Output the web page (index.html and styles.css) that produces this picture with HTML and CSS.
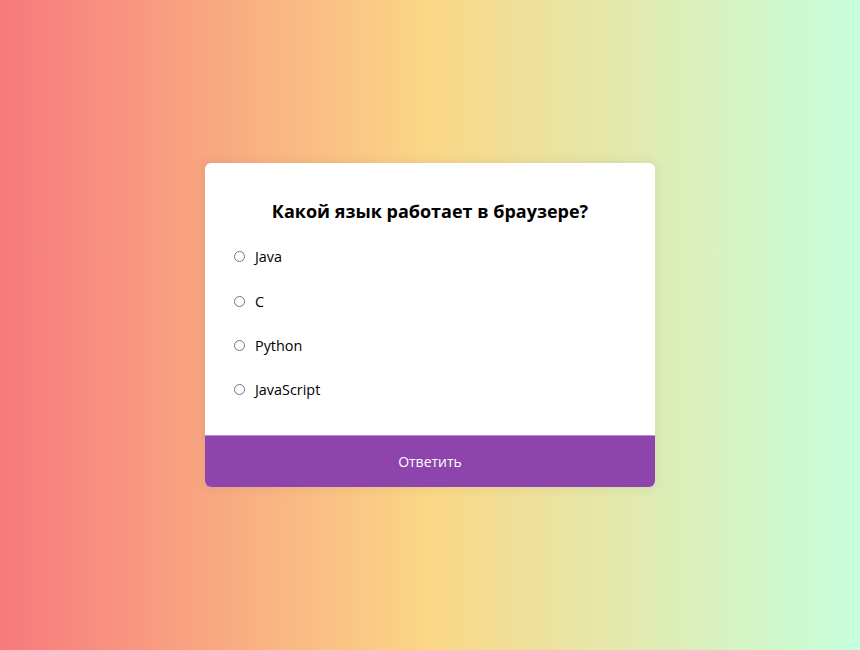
FILE: index.html
```html
<!DOCTYPE html>
<html lang="ru">
<head>
<meta charset="UTF-8">
<title>Quiz</title>
<link rel="stylesheet" href="styles.css">
</head>
<body>
<div class="quiz-container">
  <div class="quiz-header">
    <h2 class="question">Какой язык работает в браузере?</h2>
    <ul class="answers">
      <li><input type="radio" name="answer" id="a"><label for="a">Java</label></li>
      <li><input type="radio" name="answer" id="b"><label for="b">C</label></li>
      <li><input type="radio" name="answer" id="c"><label for="c">Python</label></li>
      <li><input type="radio" name="answer" id="d"><label for="d">JavaScript</label></li>
    </ul>
  </div>
  <button class="submit">Ответить</button>
</div>
</body>
</html>
```
FILE: styles.css
```css
* { box-sizing: border-box; }
html, body { margin: 0; padding: 0; }
body {
  font-family: "Open Sans", "Noto Sans", sans-serif;
  background: linear-gradient(to right, #f7797d, #fbd786, #c6ffdd);
  height: 100vh;
  display: flex;
  align-items: center;
  justify-content: center;
  overflow: hidden;
}
.quiz-container {
  width: 450px;
  background: #fff;
  border-radius: 6px;
  box-shadow: 0 0 10px 2px rgba(100, 100, 100, 0.1);
  overflow: hidden;
}
.quiz-header {
  padding: 36px 29px 35px;
}
.question {
  margin: 0 0 22.5px;
  text-align: center;
  font-size: 18px;
  line-height: 25px;
  font-weight: 700;
  color: #000;
}
.answers {
  list-style: none;
  margin: 0;
  padding: 0;
  display: flex;
  flex-direction: column;
  gap: 24.4px;
}
.answers li {
  display: flex;
  align-items: center;
  height: 20px;
  font-size: 14.4px;
  color: #000;
}
.answers input {
  margin: 0 10px 0 0;
  width: 11px;
  height: 11px;
}
.submit {
  display: block;
  width: 100%;
  height: 52px;
  border: none;
  border-top: 1px solid #b58bcb;
  background: #8e44ad;
  color: #fff;
  font-family: inherit;
  font-size: 14px;
  cursor: pointer;
}
```
